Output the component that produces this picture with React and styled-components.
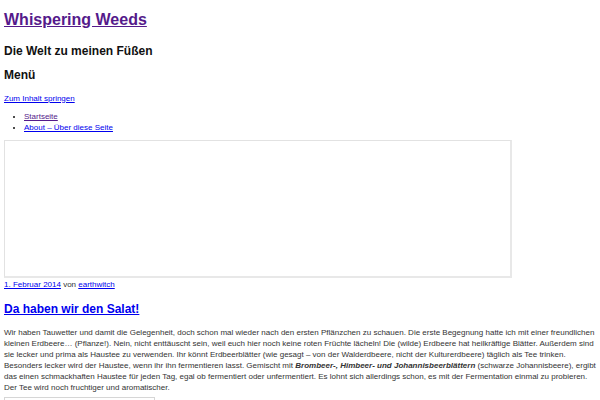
import React from "react";
import styled, { createGlobalStyle } from "styled-components";

const GlobalStyle = createGlobalStyle`
  body {
    margin: 0;
    background: #fff;
    font-family: "Liberation Sans", Arial, sans-serif;
    color: #333;
  }
`;

const Page = styled.div`
  padding: 10px 4px 0 4px;
`;

const SiteTitle = styled.h1`
  margin: 0;
  font-size: 16px;
  line-height: 20px;
  font-weight: bold;
  a {
    color: #551a8b;
  }
`;

const Tagline = styled.h2`
  margin: 14px 0 0 0;
  font-size: 12px;
  line-height: 14px;
  font-weight: bold;
  color: #111;
`;

const MenuTitle = styled.h3`
  margin: 10px 0 0 0;
  font-size: 12px;
  line-height: 14px;
  font-weight: bold;
  color: #111;
`;

const SmallLink = styled.a`
  display: block;
  margin-top: 10.5px;
  font-size: 8px;
  line-height: 11px;
  color: ${(p) => (p.$visited ? "#551a8b" : "#0000ee")};
`;

const MenuList = styled.ul`
  margin: 7.8px 0 0 0;
  padding-left: 20px;
  font-size: 8px;
  line-height: 11px;
  color: #111;
`;

const MenuItem = styled.li`
  a {
    color: ${(p) => (p.$visited ? "#551a8b" : "#0000ee")};
  }
`;

const VideoFrame = styled.div`
  margin-top: 6.6px;
  width: 508px;
  height: 138px;
  box-sizing: border-box;
  border: 2px solid #e8e8e8;
  border-top-color: #e2e2e2;
  border-left-color: #e2e2e2;
  border-top-width: 1px;
  border-left-width: 1px;
`;

const EntryMeta = styled.div`
  margin-top: 1px;
  font-size: 8px;
  line-height: 11px;
  color: #333;
  a {
    color: #0000ee;
  }
`;

const EntryTitle = styled.h2`
  margin: 11px 0 0 0;
  font-size: 12px;
  line-height: 16px;
  font-weight: bold;
  a {
    color: #0000ee;
  }
`;

const Content = styled.p`
  margin: 10px 0 0 0;
  font-size: 8px;
  line-height: 11px;
  color: #333;
`;

const VersionBox = styled.div`
  margin-top: 4px;
  width: 151px;
  height: 14px;
  box-sizing: border-box;
  border: 1px solid #d6d6d6;
  padding: 2px 3px;
  font-size: 8px;
  line-height: 11px;
  color: #0000ee;
  overflow: hidden;
`;

export default function App() {
  return (
    <Page>
      <GlobalStyle />
      <header>
        <SiteTitle>
          <a href="#">Whispering Weeds</a>
        </SiteTitle>
        <Tagline>Die Welt zu meinen Füßen</Tagline>
        <nav>
          <MenuTitle>Menü</MenuTitle>
          <SmallLink href="#">Zum Inhalt springen</SmallLink>
          <MenuList>
            <MenuItem $visited>
              <a href="#">Startseite</a>
            </MenuItem>
            <MenuItem>
              <a href="#">About – Über diese Seite</a>
            </MenuItem>
          </MenuList>
        </nav>
      </header>
      <main>
        <article>
          <VideoFrame />
          <EntryMeta>
            <a href="#">1. Februar 2014</a> von <a href="#">earthwitch</a>
          </EntryMeta>
          <EntryTitle>
            <a href="#">Da haben wir den Salat!</a>
          </EntryTitle>
          <Content>
            Wir haben Tauwetter und damit die Gelegenheit, doch schon mal wieder nach den ersten
            Pflänzchen zu schauen. Die erste Begegnung hatte ich mit einer freundlichen kleinen
            Erdbeere… (Pflanze!). Nein, nicht enttäuscht sein, weil euch hier noch keine roten
            Früchte lächeln! Die (wilde) Erdbeere hat heilkräftige Blätter. Außerdem sind sie
            lecker und prima als Haustee zu verwenden. Ihr könnt Erdbeerblätter (wie gesagt – von
            der Walderdbeere, nicht der Kulturerdbeere) täglich als Tee trinken. Besonders lecker
            wird der Haustee, wenn ihr ihn fermentieren lasst. Gemischt mit{" "}
            <strong>
              <em>Brombeer-, Himbeer- und Johannisbeerblättern</em>
            </strong>{" "}
            (schwarze Johannisbeere), ergibt das einen schmackhaften Haustee für jeden Tag, egal
            ob fermentiert oder unfermentiert. Es lohnt sich allerdings schon, es mit der
            Fermentation einmal zu probieren. Der Tee wird noch fruchtiger und aromatischer.
          </Content>
          <VersionBox>[VD_1.0.37_1280]</VersionBox>
        </article>
      </main>
    </Page>
  );
}
